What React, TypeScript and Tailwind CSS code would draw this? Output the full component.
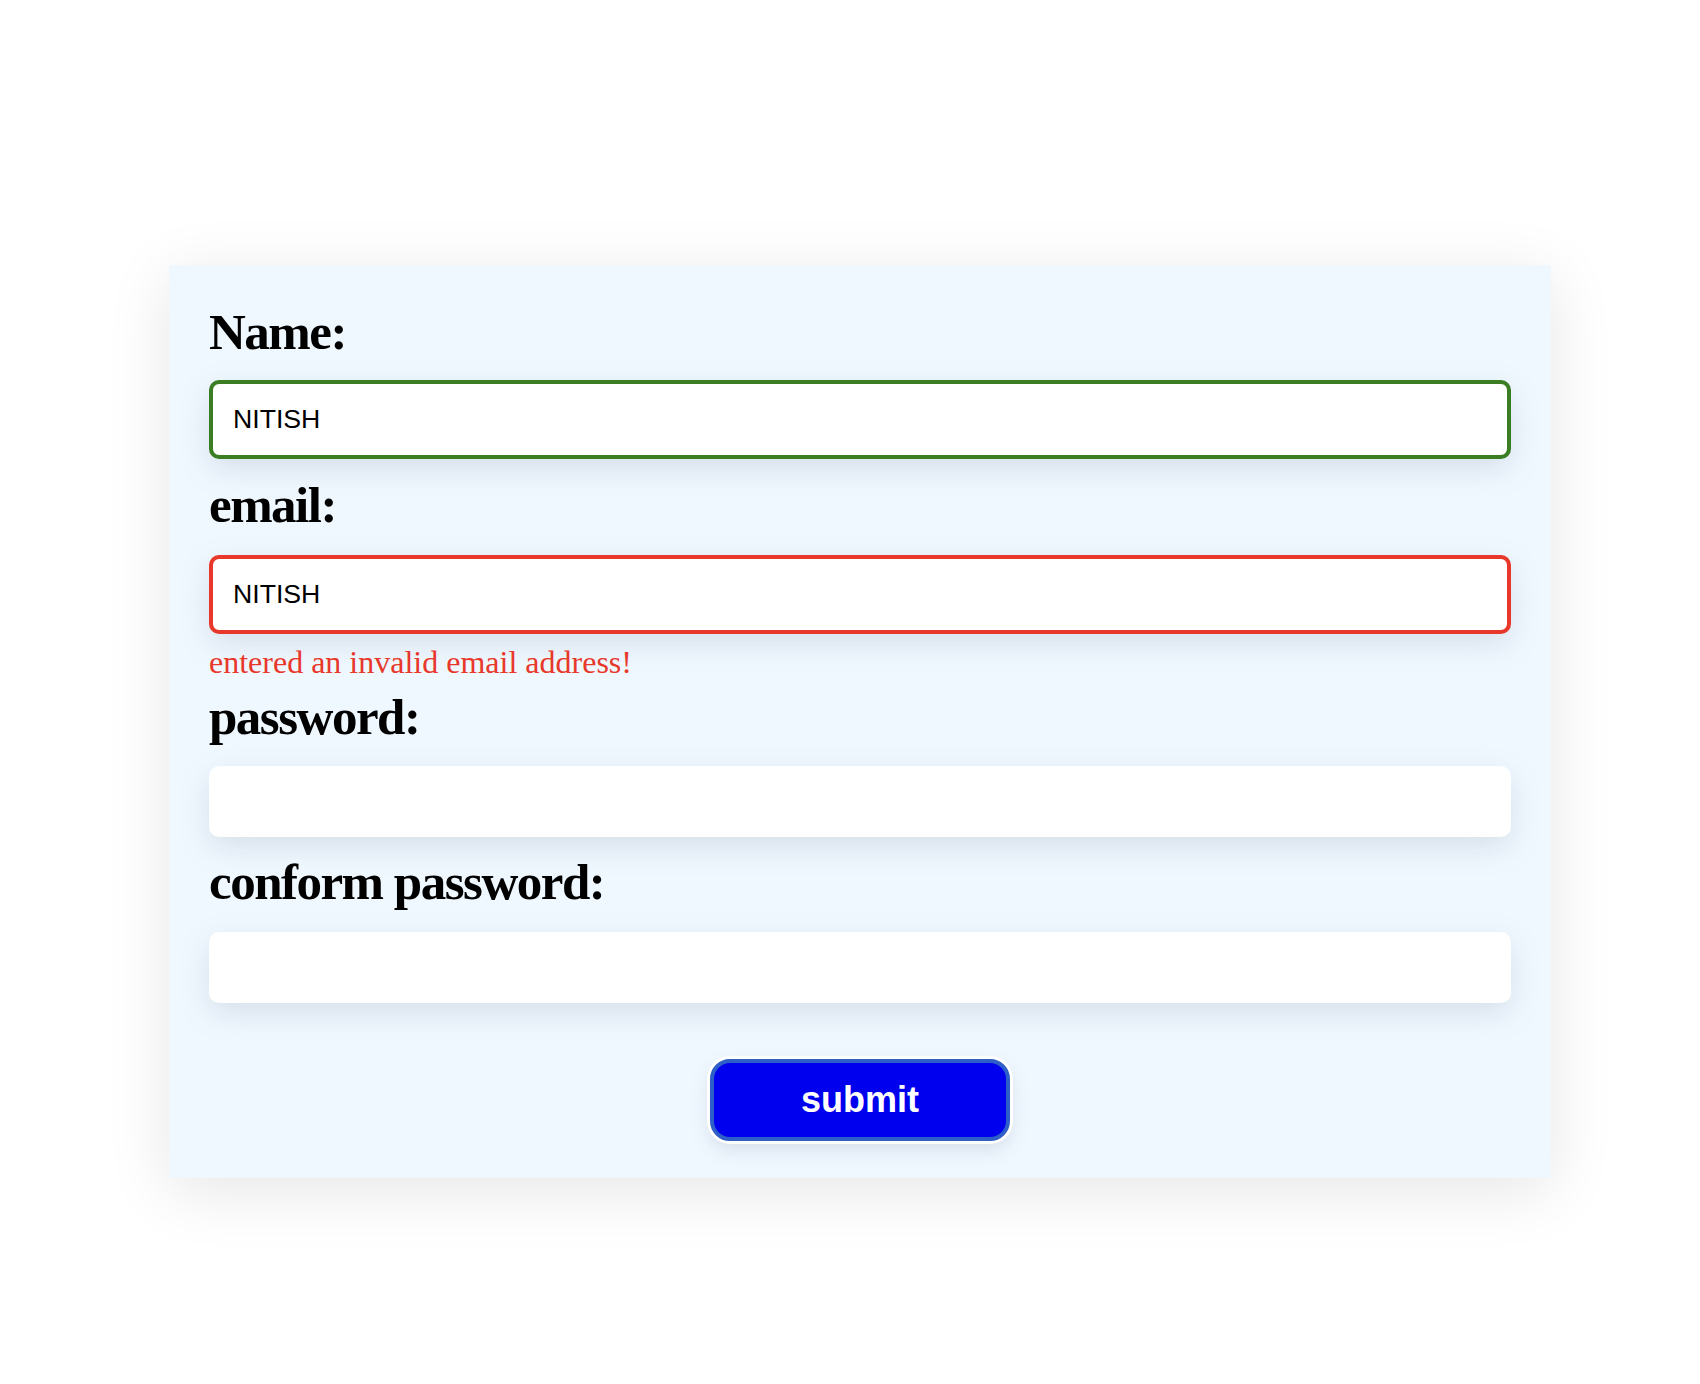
const serif = "font-['Liberation_Serif','Times_New_Roman',serif]"
const sans = "font-['Liberation_Sans',Arial,sans-serif]"

function Label({ text, className }: { text: string; className: string }) {
  return (
    <label className={`block h-[58px] text-[51px] leading-[58px] font-bold tracking-[-1.5px] text-black ${serif} ${className}`}>
      {text}
    </label>
  )
}

export default function App() {
  return (
    <div className="min-h-[1384px] bg-white pt-[265px] pl-[169px]">
      <form
        className="flex w-[1382px] flex-col bg-[#f0f8ff] px-[40px] pt-[38px] pb-[37px] shadow-[0_12px_60px_rgba(0,0,0,0.1)]"
        onSubmit={(e) => e.preventDefault()}
      >
        <Label text="Name:" className="" />
        <input
          defaultValue="NITISH"
          className={`mt-[19px] h-[79px] w-full rounded-[10px] border-4 border-[#3b7d23] bg-white px-[20px] text-[26.67px] text-black outline-none shadow-[0_10px_30px_rgba(100,116,139,0.18)] ${sans}`}
        />

        <Label text="email:" className="mt-[17px]" />
        <input
          defaultValue="NITISH"
          className={`mt-[21px] h-[79px] w-full rounded-[10px] border-4 border-[#e8372b] bg-white px-[20px] text-[26.67px] text-black outline-none shadow-[0_10px_30px_rgba(100,116,139,0.18)] ${sans}`}
        />
        <p className={`mt-[10px] h-[37px] text-[32px] leading-[37px] text-[#e8372b] ${serif}`}>
          entered an invalid email address!
        </p>

        <Label text="password:" className="mt-[7px]" />
        <input
          type="password"
          className="mt-[20px] h-[71px] w-full rounded-[10px] bg-white px-[24px] outline-none shadow-[0_10px_30px_rgba(100,116,139,0.18)]"
        />

        <Label text="conform password:" className="mt-[16px]" />
        <input
          type="password"
          className="mt-[21px] h-[71px] w-full rounded-[10px] bg-white px-[24px] outline-none shadow-[0_10px_30px_rgba(100,116,139,0.18)]"
        />

        <button
          type="submit"
          className={`mx-auto mt-[56px] h-[82px] w-[300px] rounded-[20px] border-4 border-[#2e5ec8] bg-[#0000ee] text-[36px] font-bold text-white shadow-[0_0_0_3px_#ffffff,0_8px_20px_rgba(100,116,139,0.2)] ${sans}`}
        >
          submit
        </button>
      </form>
    </div>
  )
}
